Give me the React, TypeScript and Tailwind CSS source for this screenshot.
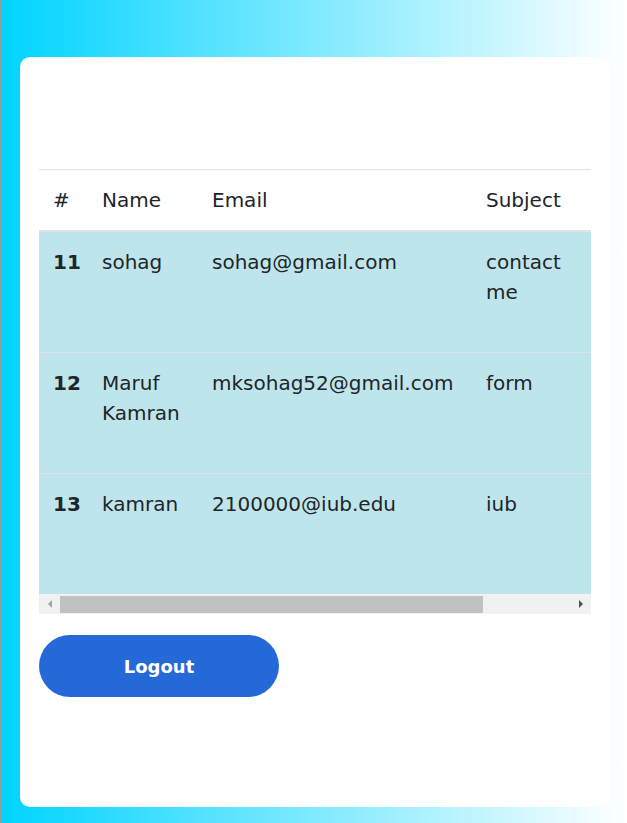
import React from "react";

type Row = {
  id: number;
  name: string;
  email: string;
  subject: string;
};

const rows: Row[] = [
  { id: 11, name: "sohag", email: "sohag@gmail.com", subject: "contact me" },
  { id: 12, name: "Maruf Kamran", email: "mksohag52@gmail.com", subject: "form" },
  { id: 13, name: "kamran", email: "2100000@iub.edu", subject: "iub" },
];

export default function App() {
  return (
    <div
      className="min-h-screen w-full border-l border-[#9a9a9a] bg-[linear-gradient(90deg,#00d4ff_0%,#ffffff_100%)] pt-[57px] pb-[16px] pl-[19px] pr-[17px]"
      style={{ fontFamily: '"DejaVu Sans", "Liberation Sans", sans-serif' }}
    >
      <div className="rounded-[10px] bg-white px-[19px] pt-[112px] pb-[110px]">
        {/* Table, clipped horizontally */}
        <div className="w-full overflow-hidden">
          <table className="w-full table-fixed border-collapse text-[20px] leading-[30px] text-[#212529]">
            <colgroup>
              <col className="w-[49px]" />
              <col className="w-[110px]" />
              <col className="w-[274px]" />
              <col />
            </colgroup>
            <thead>
              <tr className="border-t border-b-2 border-[#dee2e6]">
                <th className="px-[14px] py-[15px] text-left font-medium">#</th>
                <th className="px-[14px] py-[15px] text-left font-medium">Name</th>
                <th className="px-[14px] py-[15px] text-left font-medium">Email</th>
                <th className="px-[14px] py-[15px] text-left font-medium">Subject</th>
              </tr>
            </thead>
            <tbody>
              {rows.map((r) => (
                <tr key={r.id} className="h-[121px] border-t border-[#dee2e6] bg-[#bee5eb] first:border-t-0">
                  <td className="px-[14px] py-[15px] align-top font-bold">{r.id}</td>
                  <td className="px-[14px] py-[15px] align-top">{r.name}</td>
                  <td className="px-[14px] py-[15px] align-top">{r.email}</td>
                  <td className="px-[14px] py-[15px] align-top">{r.subject}</td>
                </tr>
              ))}
            </tbody>
          </table>
        </div>

        {/* Horizontal scrollbar */}
        <div className="flex h-[20px] items-center bg-[#f1f1f1]">
          <div className="flex h-full w-[21px] items-center justify-center">
            <div className="h-0 w-0 border-y-[4px] border-r-[4px] border-y-transparent border-r-[#a3a3a3]" />
          </div>
          <div className="flex h-full flex-1 items-center">
            <div className="h-[17px] w-[423px] bg-[#c1c1c1]" />
          </div>
          <div className="flex h-full w-[21px] items-center justify-center">
            <div className="h-0 w-0 border-y-[4px] border-l-[4px] border-y-transparent border-l-[#505050]" />
          </div>
        </div>

        <button
          type="button"
          className="mt-[21px] flex h-[62px] w-[240px] items-center justify-center rounded-full bg-[#2569d9] text-[18px] font-bold text-white"
        >
          Logout
        </button>
      </div>
    </div>
  );
}
